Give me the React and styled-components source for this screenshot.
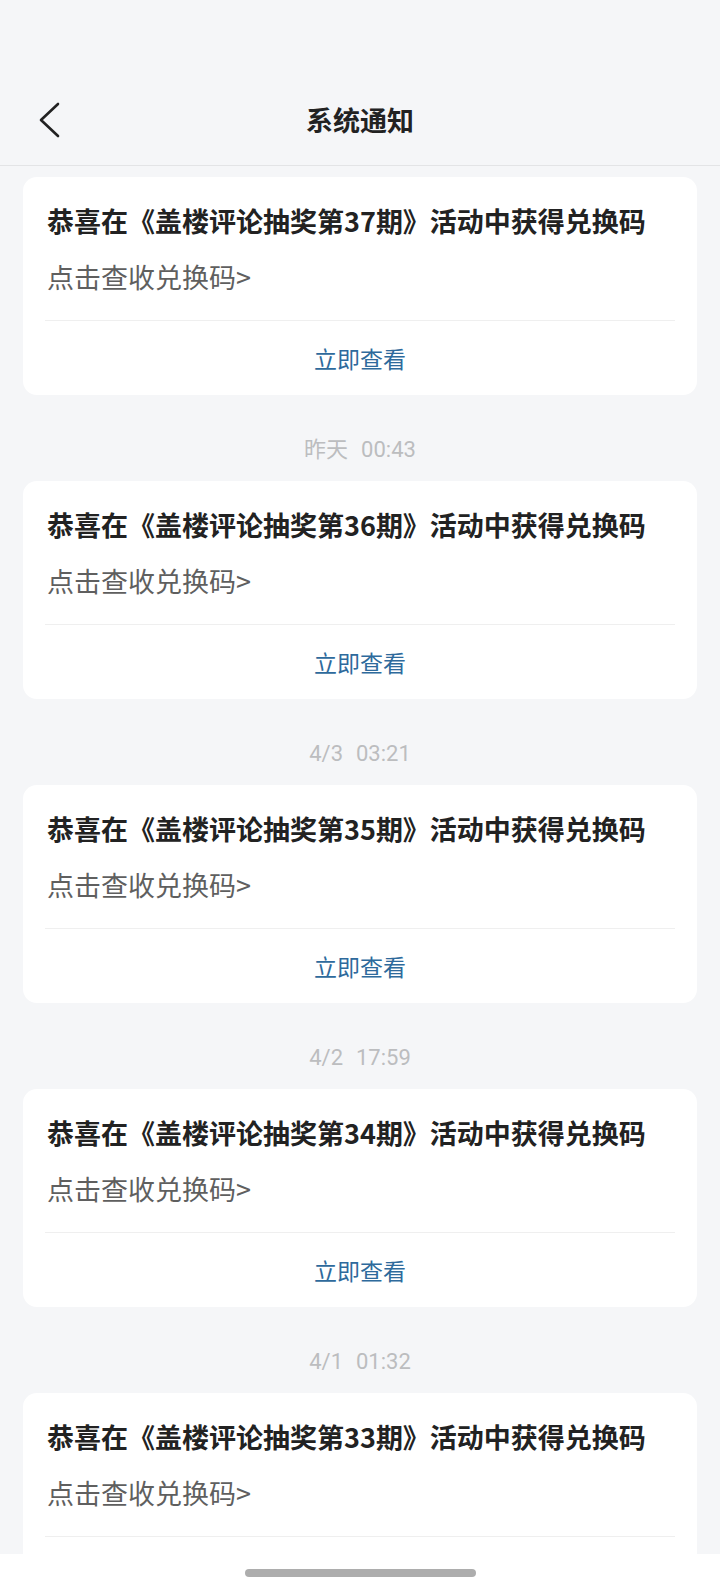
import React from 'react';
import styled, { createGlobalStyle } from 'styled-components';

const GlobalStyle = createGlobalStyle`
  html, body {
    margin: 0;
    padding: 0;
    background: #f5f6f8;
  }
  body {
    font-family: "Noto Sans CJK SC", "Noto Sans", Roboto, sans-serif;
  }
`;

const notices = [
  { issue: 37, day: null, time: null },
  { issue: 36, day: '昨天', time: '00:43' },
  { issue: 35, day: '4/3', time: '03:21' },
  { issue: 34, day: '4/2', time: '17:59' },
  { issue: 33, day: '4/1', time: '01:32' },
];

const Page = styled.div`
  width: 720px;
  height: 1592px;
  display: flex;
  flex-direction: column;
  background: #f5f6f8;
  overflow: hidden;
`;

const StatusBar = styled.div`
  height: 74px;
  flex-shrink: 0;
`;

const Header = styled.header`
  position: relative;
  height: 91px;
  flex-shrink: 0;
  display: flex;
  align-items: center;
  justify-content: center;
  border-bottom: 1px solid #e3e4e6;
`;

const BackButton = styled.button`
  position: absolute;
  left: 32px;
  top: 50%;
  transform: translateY(-50%);
  width: 36px;
  height: 48px;
  padding: 0;
  border: none;
  background: none;
  display: flex;
  align-items: center;
  justify-content: center;
`;

const Title = styled.h1`
  margin: 0;
  font-size: 27px;
  font-weight: 700;
  color: #222;
  line-height: 36px;
`;

const List = styled.div`
  flex: 1;
  min-height: 0;
  overflow: hidden;
  padding: 11px 23px 0;
  display: flex;
  flex-direction: column;
`;

const Stamp = styled.div`
  box-sizing: border-box;
  height: 86px;
  padding-top: 42px;
  flex-shrink: 0;
  overflow: hidden;
  text-align: center;
  font-family: Roboto, "Noto Sans CJK SC", sans-serif;
  font-size: 22px;
  line-height: 25px;
  color: #bcbdbf;
`;

const StampTime = styled.span`
  margin-left: 13px;
`;

const Card = styled.div`
  background: #fff;
  border-radius: 14px;
  padding: 0 22px;
  flex-shrink: 0;
`;

const Body = styled.div`
  padding: 26px 2px 25px;
  border-bottom: 1px solid #efefef;
`;

const CardTitle = styled.div`
  height: 36px;
  font-size: 27px;
  font-weight: 700;
  line-height: 36px;
  color: #222;
  white-space: nowrap;
`;

const CardText = styled.div`
  height: 36px;
  margin-top: 20px;
  font-size: 27px;
  line-height: 36px;
  color: #5f5f5f;
`;

const Action = styled.div`
  height: 74px;
  display: flex;
  align-items: center;
  justify-content: center;
  font-size: 23px;
  color: #2e6a9c;
`;

const NavBar = styled.div`
  height: 38px;
  flex-shrink: 0;
  background: #fff;
  display: flex;
  align-items: center;
  justify-content: center;
`;

const Indicator = styled.div`
  width: 231px;
  height: 8px;
  border-radius: 4px;
  background: #adadad;
`;

function Notice({ issue, day, time }) {
  return (
    <>
      {day && (
        <Stamp>
          {day}
          <StampTime>{time}</StampTime>
        </Stamp>
      )}
      <Card>
        <Body>
          <CardTitle>恭喜在《盖楼评论抽奖第{issue}期》活动中获得兑换码</CardTitle>
          <CardText>点击查收兑换码&gt;</CardText>
        </Body>
        <Action>立即查看</Action>
      </Card>
    </>
  );
}

export default function App() {
  return (
    <Page>
      <GlobalStyle />
      <StatusBar />
      <Header>
        <BackButton aria-label="返回">
          <svg width="22" height="36" viewBox="0 0 22 36">
            <polyline
              points="19,2 2,18 19,34"
              fill="none"
              stroke="#222"
              strokeWidth="2.6"
              strokeLinecap="round"
              strokeLinejoin="round"
            />
          </svg>
        </BackButton>
        <Title>系统通知</Title>
      </Header>
      <List>
        {notices.map((n) => (
          <Notice key={n.issue} {...n} />
        ))}
      </List>
      <NavBar>
        <Indicator />
      </NavBar>
    </Page>
  );
}
